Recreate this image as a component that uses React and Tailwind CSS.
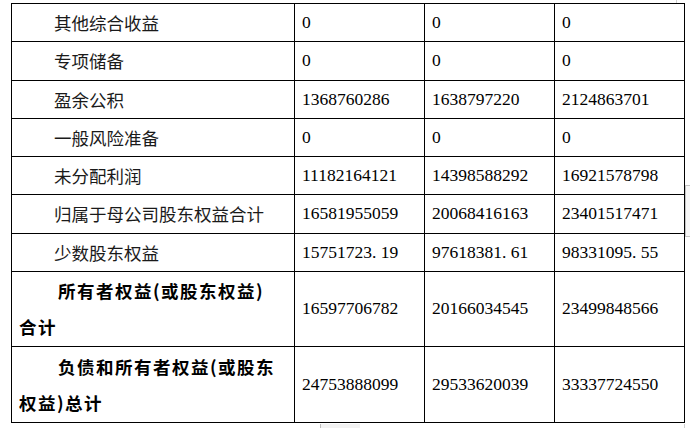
const rows = [
  { name: '其他综合收益', values: ['0', '0', '0'], h: 'h-[38px]' },
  { name: '专项储备', values: ['0', '0', '0'], h: 'h-[39px]' },
  { name: '盈余公积', values: ['1368760286', '1638797220', '2124863701'], h: 'h-[38px]' },
  { name: '一般风险准备', values: ['0', '0', '0'], h: 'h-[38px]' },
  { name: '未分配利润', values: ['11182164121', '14398588292', '16921578798'], h: 'h-[38px]' },
  { name: '归属于母公司股东权益合计', values: ['16581955059', '20068416163', '23401517471'], h: 'h-[39px]' },
  { name: '少数股东权益', values: ['15751723.19', '97618381.61', '98331095.55'], h: 'h-[38px]' },
];

const totals = [
  { first: '所有者权益(或股东权益)', second: '合计', values: ['16597706782', '20166034545', '23499848566'], h: 'h-[75px]' },
  { first: '负债和所有者权益(或股东', second: '权益)总计', values: ['24753888099', '29533620039', '33337724550'], h: 'h-[76px]' },
];

const cjk = "font-['Noto_Sans_CJK_SC',sans-serif]";
const num = "font-['Liberation_Serif','Noto_Sans_CJK_SC',serif]";

// 小数点按半角宽度显示
function Num({ value }) {
  const [a, b] = value.split('.');
  if (b === undefined) return <>{value}</>;
  return (
    <>
      {a}
      <span className="inline-block w-[0.5em]">.</span>
      {b}
    </>
  );
}

function NumCell({ value }) {
  return (
    <td className={`border border-black pl-[7px] align-middle text-[17.5px] leading-none text-black ${num}`}>
      <Num value={value} />
    </td>
  );
}

export default function App() {
  return (
    <div className="relative w-[690px] h-[428px] overflow-hidden bg-white">
      <div className="pl-[11px] pt-[3px]">
        <table className="table-fixed border-collapse">
          <colgroup>
            <col className="w-[283px]" />
            <col className="w-[130px]" />
            <col className="w-[130px]" />
            <col className="w-[130px]" />
          </colgroup>
          <tbody>
            {rows.map((row) => (
              <tr key={row.name} className={row.h}>
                <td className={`border border-black pl-[7px] align-middle text-[17.5px] leading-none text-[#1a1a1a] indent-[2em] ${cjk}`}>
                  {row.name}
                </td>
                {row.values.map((v, i) => (
                  <NumCell key={i} value={v} />
                ))}
              </tr>
            ))}
            {totals.map((row) => (
              <tr key={row.first} className={row.h}>
                <td className={`border border-black pl-[7px] align-middle text-[17.5px] leading-[36px] tracking-[1.5px] font-bold text-black ${cjk}`}>
                  <div className="pl-[39px] whitespace-nowrap">{row.first}</div>
                  <div>{row.second}</div>
                </td>
                {row.values.map((v, i) => (
                  <NumCell key={i} value={v} />
                ))}
              </tr>
            ))}
          </tbody>
        </table>
      </div>

      {/* page decorations */}
      <div className="absolute left-[685px] top-[185px] w-[6px] h-[52px] border-l border-t border-b border-[#c4c4c4] bg-[#f7f7f7]" />
      <div className="absolute left-[320px] top-[424px] w-[40px] h-[6px] border-l border-[#bdbdbd] bg-[#f2f2f2]" />
      <div className="absolute left-[684px] top-[424px] w-[6px] h-[6px] border-l border-[#d0d0d0]" />
      <div className="absolute left-[676px] top-0 w-px h-[3px] bg-[#d0d0d0]" />
    </div>
  );
}
